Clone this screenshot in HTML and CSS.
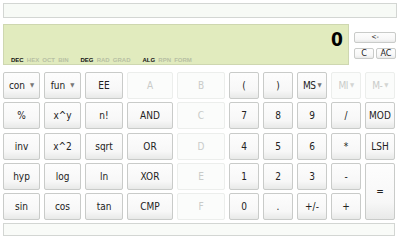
FILE: index.html
```html
<!DOCTYPE html>
<html lang="en">
<head>
    <meta charset="UTF-8">
    <title>Calculator</title>
    <link rel="stylesheet" href="styles.css">
</head>
<body>
    <div class="history"></div>

    <div class="top">
        <div class="display">
            <div class="value">0</div>
            <div class="modes">
                <span class="group"><b>DEC</b> HEX OCT BIN</span>
                <span class="group"><b>DEG</b> RAD GRAD</span>
                <span class="group"><b>ALG</b> RPN FORM</span>
            </div>
        </div>
        <div class="edit">
            <button class="small wide">&lt;-</button>
            <div class="edit-row">
                <button class="small">C</button>
                <button class="small">AC</button>
            </div>
        </div>
    </div>

    <div class="keypad">
        <button class="key">con <span class="arrow">&#9660;</span></button>
        <button class="key">fun <span class="arrow">&#9660;</span></button>
        <button class="key">EE</button>
        <button class="key off">A</button>
        <button class="key off">B</button>
        <button class="key">(</button>
        <button class="key">)</button>
        <button class="key tight">MS<span class="arrow">&#9660;</span></button>
        <button class="key tight off">MI<span class="arrow">&#9660;</span></button>
        <button class="key tight off">M-<span class="arrow">&#9660;</span></button>

        <button class="key">%</button>
        <button class="key">x^y</button>
        <button class="key">n!</button>
        <button class="key">AND</button>
        <button class="key off">C</button>
        <button class="key">7</button>
        <button class="key">8</button>
        <button class="key">9</button>
        <button class="key">/</button>
        <button class="key">MOD</button>

        <button class="key">inv</button>
        <button class="key">x^2</button>
        <button class="key">sqrt</button>
        <button class="key">OR</button>
        <button class="key off">D</button>
        <button class="key">4</button>
        <button class="key">5</button>
        <button class="key">6</button>
        <button class="key">*</button>
        <button class="key">LSH</button>

        <button class="key">hyp</button>
        <button class="key">log</button>
        <button class="key">ln</button>
        <button class="key">XOR</button>
        <button class="key off">E</button>
        <button class="key">1</button>
        <button class="key">2</button>
        <button class="key">3</button>
        <button class="key">-</button>
        <button class="key equals">=</button>

        <button class="key">sin</button>
        <button class="key">cos</button>
        <button class="key">tan</button>
        <button class="key">CMP</button>
        <button class="key off">F</button>
        <button class="key">0</button>
        <button class="key">.</button>
        <button class="key">+/-</button>
        <button class="key">+</button>
    </div>

    <div class="input"></div>
</body>
</html>
```

FILE: styles.css
```css
body {
    margin: 0;
    padding: 3px;
    width: 394px;
    height: 234px;
    background-color: #ffffff;
    font-family: "DejaVu Sans Condensed", "DejaVu Sans", sans-serif;
    color: #222;
    display: flex;
    flex-direction: column;
}
.history {
    height: 13px;
    border: 1px solid #d3d6d3;
    background-color: #f7faf6;
}
.top {
    display: flex;
    margin-top: 6px;
    height: 41px;
}
.display {
    width: 344px;
    border: 1px solid #ced7b0;
    background-color: #e1ebbe;
    position: relative;
}
.value {
    position: absolute;
    right: 5px;
    top: 3px;
    font-size: 19px;
    font-weight: bold;
    color: #000;
}
.modes {
    position: absolute;
    left: 7px;
    bottom: 1px;
    font-family: "Liberation Sans", Arial, sans-serif;
    font-size: 6px;
    font-weight: bold;
    word-spacing: 1.5px;
    color: #b7c0a3;
    display: flex;
    gap: 12px;
}
.modes b {
    color: #111;
}
.edit {
    margin-left: 5px;
    margin-top: 8px;
    display: flex;
    flex-direction: column;
    gap: 5px;
}
.edit-row {
    display: flex;
    gap: 2px;
}
button {
    font-family: inherit;
    margin: 0;
    padding: 0;
    color: #222;
    border: 1px solid #c9cbc9;
    border-radius: 2px;
    background: linear-gradient(#fdfdfd, #f7f7f7 70%, #e8e9e8);
}
.small {
    width: 20px;
    height: 11px;
    font-size: 9px;
    line-height: 9px;
}
.small.wide {
    width: 42px;
    font-size: 7px;
}
.keypad {
    margin-top: 7px;
    display: grid;
    grid-template-columns: 37px 37px 38px 46px 48px 30px 30px 30px 30px 30px;
    grid-auto-rows: 27px;
    column-gap: 4px;
    row-gap: 3.3px;
}
.key {
    font-size: 10px;
    white-space: nowrap;
    overflow: hidden;
}
.key .arrow {
    font-size: 6px;
    color: #777;
    vertical-align: 2px;
    margin-left: 2px;
}
.key.tight {
    letter-spacing: -0.5px;
}
.key.off {
    color: #c9cbc9;
    border-color: #eceeec;
    background: #fbfcfb;
}
.key.off .arrow {
    color: #d3d5d3;
}
.equals {
    grid-column: 10;
    grid-row: 4 / span 2;
}
.input {
    margin-top: 3px;
    width: 390px;
    height: 11px;
    border: 1px solid #d3d6d3;
    background-color: #f9fbf8;
}
```
